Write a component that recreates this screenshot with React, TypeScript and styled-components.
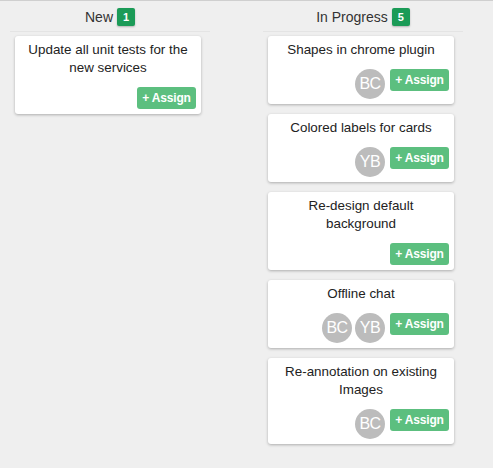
import React from "react";
import styled, { createGlobalStyle } from "styled-components";

const Global = createGlobalStyle`
  html, body { margin: 0; padding: 0; }
  body {
    background: #efefef;
    font-family: "Helvetica Neue", "Liberation Sans", Arial, sans-serif;
    color: #222;
    border-top: 1px solid #cfcfcf;
    min-height: 467px;
  }
`;

const Board = styled.div`
  display: flex;
  align-items: flex-start;
  gap: 53px;
  padding: 0 10px;
`;

const Column = styled.div`
  width: 200px;
  display: flex;
  flex-direction: column;
`;

const Header = styled.div`
  display: flex;
  align-items: center;
  justify-content: center;
  gap: 4px;
  font-size: 14px;
  color: #333;
  border-bottom: 1px solid #e4e4e4;
  padding-top: 1px;
  box-sizing: border-box;
  height: 31px;
`;

const Badge = styled.span`
  display: inline-flex;
  align-items: center;
  justify-content: center;
  width: 18px;
  height: 18px;
  border-radius: 2px;
  background: #1b9b57;
  color: #fff;
  font-size: 11px;
  font-weight: bold;
  box-shadow: 0 1px 2px rgba(0,0,0,0.25);
`;

const Cards = styled.div`
  display: flex;
  flex-direction: column;
  gap: 10px;
  padding: 4px 0 0 5px;
`;

const Card = styled.div`
  width: 186px;
  box-sizing: border-box;
  background: #fff;
  border-radius: 3px;
  box-shadow: 0 1px 3px rgba(0,0,0,0.28);
  padding: 5px 5px 5px;
  display: flex;
  flex-direction: column;
`;

const Title = styled.div`
  text-align: center;
  font-size: 13.4px;
  line-height: 18px;
  color: #222;
  padding: 0 4px;
`;

const Footer = styled.div`
  margin-top: 10px;
  display: flex;
  justify-content: flex-end;
  align-items: flex-start;
  gap: 3px;
`;

const Avatar = styled.div`
  width: 30px;
  height: 30px;
  border-radius: 50%;
  background: #bcbcbc;
  color: #fff;
  font-size: 16px;
  display: flex;
  align-items: center;
  justify-content: center;
  letter-spacing: -0.5px;
`;

const AssignButton = styled.button`
  margin-left: 2px;
  width: 59px;
  height: 22px;
  border: none;
  border-radius: 3px;
  background: #5cbf7f;
  color: #fff;
  font-family: inherit;
  font-size: 12px;
  font-weight: bold;
  letter-spacing: -0.2px;
  padding: 0;
  cursor: pointer;
`;

type Task = { title: string; avatars: string[] };

const columns: { name: string; tasks: Task[] }[] = [
  {
    name: "New",
    tasks: [{ title: "Update all unit tests for the new services", avatars: [] }],
  },
  {
    name: "In Progress",
    tasks: [
      { title: "Shapes in chrome plugin", avatars: ["BC"] },
      { title: "Colored labels for cards", avatars: ["YB"] },
      { title: "Re-design default background", avatars: [] },
      { title: "Offline chat", avatars: ["BC", "YB"] },
      { title: "Re-annotation on existing Images", avatars: ["BC"] },
    ],
  },
];

export default function App() {
  return (
    <>
      <Global />
      <Board>
        {columns.map((c) => (
          <Column key={c.name}>
            <Header>
              {c.name}
              <Badge>{c.tasks.length}</Badge>
            </Header>
            <Cards>
              {c.tasks.map((t) => (
                <Card key={t.title}>
                  <Title>{t.title}</Title>
                  <Footer>
                    {t.avatars.map((a) => (
                      <Avatar key={a}>{a}</Avatar>
                    ))}
                    <AssignButton>+ Assign</AssignButton>
                  </Footer>
                </Card>
              ))}
            </Cards>
          </Column>
        ))}
      </Board>
    </>
  );
}
